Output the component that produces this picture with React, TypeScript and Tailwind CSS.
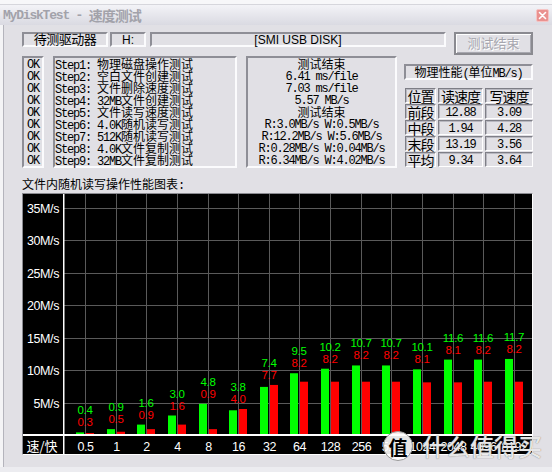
import React from 'react';

const steps = [
  '物理磁盘操作测试',
  '空白文件创建测试',
  '文件删除速度测试',
  '32MB文件创建测试',
  '文件读写速度测试',
  '4.0K随机读写测试',
  '512K随机读写测试',
  '4.0K文件复制测试',
  '32MB文件复制测试',
];

const results = [
  '测试结束',
  '6.41 ms/file',
  '7.03 ms/file',
  '5.57 MB/s',
  '测试结束',
  'R:3.0MB/s W:0.5MB/s',
  'R:12.2MB/s W:5.6MB/s',
  'R:0.28MB/s W:0.04MB/s',
  'R:6.34MB/s W:4.02MB/s',
];

const perf = [
  ['前段', '12.88', '3.09'],
  ['中段', '1.94', '4.28'],
  ['末段', '13.19', '3.56'],
  ['平均', '9.34', '3.64'],
];

// block size, read (green), write (red)
const blocks: [string, number, number][] = [
  ['0.5', 0.4, 0.3],
  ['1', 0.9, 0.5],
  ['2', 1.6, 0.9],
  ['4', 3.0, 1.6],
  ['8', 4.8, 0.9],
  ['16', 3.8, 4.0],
  ['32', 7.4, 7.7],
  ['64', 9.5, 8.2],
  ['128', 10.2, 8.2],
  ['256', 10.7, 8.2],
  ['512', 10.7, 8.2],
  ['1024', 10.1, 8.1],
  ['2048', 11.6, 8.1],
  ['4096', 11.6, 8.2],
  ['8192', 11.7, 8.2],
];

const sunken = 'border-2 border-t-[#8e8e96] border-l-[#8e8e96] border-r-[#fbfbfd] border-b-[#fbfbfd]';
const cell = 'border border-t-[#7e7e86] border-l-[#7e7e86] border-r-white border-b-white shadow-[inset_1px_1px_0_#b8b8c0]';

// SimSun-like: ASCII runs in a narrow mono (6px advance), CJK runs at 12px.
function Mixed({ text }: { text: string }) {
  const parts = text.match(/[\x00-\x7f]+|[^\x00-\x7f]+/g) ?? [];
  return (
    <>
      {parts.map((p, i) =>
        /^[\x00-\x7f]/.test(p) ? (
          <span key={i} className="font-['Liberation_Mono',monospace] tracking-[-1.2px] whitespace-pre">
            {p}
          </span>
        ) : (
          <span key={i} className="font-['Noto_Sans_CJK_SC']">
            {p}
          </span>
        )
      )}
    </>
  );
}

function Chart() {
  const base = 241;
  const perM = 6.5;
  const cx = (i: number) => Math.round(62 + 30.64 * i);

  return (
    <svg width={509} height={260} className="block">
      {/* horizontal grid */}
      {[1, 2, 3, 4, 5, 6, 7].map(k => (
        <line key={k} x1={40} x2={509} y1={Math.round(base - 32.5 * k) + 0.5} y2={Math.round(base - 32.5 * k) + 0.5} stroke="#5a5a5a" strokeWidth={1} />
      ))}
      {/* vertical grid */}
      {blocks.map((_, i) => (
        <line key={i} x1={cx(i) + 0.5} x2={cx(i) + 0.5} y1={0} y2={base} stroke="#5a5a5a" strokeWidth={1} />
      ))}
      {/* y labels */}
      {[1, 2, 3, 4, 5, 6, 7].map(k => (
        <text key={k} x={36} y={Math.round(base - 32.5 * k) + 5} textAnchor="end" letterSpacing={-0.4} className="fill-white font-['Liberation_Sans'] text-[12.5px]">
          {k * 5}M/s
        </text>
      ))}
      {/* bars + value labels */}
      {blocks.map(([label, r, w], i) => {
        const c = cx(i);
        const hr = r * perM;
        const hw = w * perM;
        const top = base - Math.max(hr, hw);
        return (
          <g key={label}>
            <rect x={c - 9} y={base - hr} width={8} height={hr} fill="#00ff00" />
            <rect x={c + 1} y={base - hw} width={8} height={hw} fill="#ff0000" />
            <text x={c} y={top - 18} textAnchor="middle" letterSpacing={-0.3} className="fill-[#00ff00] font-['Liberation_Sans'] text-[11.5px]">
              {r.toFixed(1)}
            </text>
            <text x={c} y={top - 6} textAnchor="middle" letterSpacing={-0.3} className="fill-[#ff0000] font-['Liberation_Sans'] text-[11.5px]">
              {w.toFixed(1)}
            </text>
            <text x={c + 0.5} y={257} textAnchor="middle" letterSpacing={-0.5} className="fill-white font-['Liberation_Sans'] text-[12.5px]">
              {label}
            </text>
          </g>
        );
      })}
      {/* axes */}
      <rect x={0} y={base - 1} width={509} height={2} fill="#ffffff" />
      <rect x={40} y={0} width={1.5} height={260} fill="#ffffff" />
      <text x={19} y={257} textAnchor="middle" className="fill-white font-['Noto_Sans_CJK_SC'] text-[13px]">
        速/快
      </text>
    </svg>
  );
}

export default function App() {
  return (
    <div className="relative w-[552px] h-[472px] overflow-hidden flex flex-col bg-[#e1e0e5] text-black text-[12px] font-['Liberation_Sans','Noto_Sans_CJK_SC',sans-serif]">
      {/* strip of whatever lies behind */}
      <div className="h-[5px] bg-[#f7f7f9] border-b border-[#d6d6dc]" />

      {/* title bar (inactive) */}
      <div className="h-[20px] flex justify-between bg-linear-to-b from-[#f3f3f7] to-[#dadae2]">
        <div className="pl-[3px] flex items-center font-bold text-[13px] text-[#a2a2aa] leading-none">
          <span className="font-['Liberation_Mono',monospace] tracking-[-1.2px] whitespace-pre">MyDiskTest - </span>
          <span className="font-['Noto_Sans_CJK_SC'] text-[14px] tracking-[-1px]">速度测试</span>
        </div>
        <div className="mt-[4px] mr-[3px] w-[13px] h-[13px] rounded-[2px] bg-[#ea918f] border border-[#f5c4c4] flex items-center justify-center">
          <svg width="9" height="9" viewBox="0 0 9 9">
            <path d="M1.5 1.5l6 6M7.5 1.5l-6 6" stroke="#fff" strokeWidth={1.6} strokeLinecap="round" />
          </svg>
        </div>
      </div>

      <div className="flex flex-1">
        <div className="w-[4px] bg-[#f4f4f6] border-r border-[#b4b4bc]" />

        <div className="flex flex-col pl-[18px] pr-[19px]">
          {/* drive row */}
          <div className="mt-[7px] flex items-start h-[23px]">
            <div className={`w-[86px] h-[15px] ${sunken} flex items-center justify-center leading-none text-[13px] tracking-[-0.5px]`}>待测驱动器</div>
            <div className={`ml-[2px] w-[36px] h-[15px] ${sunken} flex items-center justify-center leading-none`}>H:</div>
            <div className={`ml-[4px] w-[296px] h-[15px] ${sunken} flex items-center justify-center leading-none`}>[SMI USB DISK]</div>
            <div className="ml-[8px] w-[79px] h-[23px] border-2 border-[#8a8a90] shadow-[inset_1px_1px_0_#ffffff,inset_-1px_-1px_0_#a8a8b0] flex items-center justify-center text-[13px] text-[#a6a6ae] [text-shadow:1px_1px_0_#ffffff]">
              测试结束
            </div>
          </div>

          {/* status row */}
          <div className="mt-[1px] flex h-[112px]">
            <div className={`w-[22px] ${sunken} flex flex-col items-center`}>
              {steps.map((_, i) => (
                <div key={i} className="h-[12px] leading-[12px]">
                  <Mixed text="OK" />
                </div>
              ))}
            </div>

            <div className={`ml-[9px] w-[184px] ${sunken} flex flex-col`}>
              {steps.map((s, i) => (
                <div key={i} className="h-[12px] leading-[12px] whitespace-nowrap">
                  <Mixed text={`Step${i + 1}: ${s}`} />
                </div>
              ))}
            </div>

            <div className={`ml-[9px] w-[151px] ${sunken} flex flex-col items-center`}>
              {results.map((r, i) => (
                <div key={i} className="h-[12px] leading-[12px] whitespace-nowrap">
                  <Mixed text={r} />
                </div>
              ))}
            </div>

            <div className="ml-[7px] w-[129px] flex flex-col">
              <div className={`mt-[8px] h-[16px] ${sunken} flex items-center justify-center`}>
                <div className="h-[12px] leading-[12px] whitespace-nowrap">
                  <Mixed text="物理性能(单位MB/s)" />
                </div>
              </div>
              <div className="mt-[8px] ml-[1px] grid grid-cols-[31px_45px_48px] gap-x-[2px] gap-y-[1px]">
                {['位置', '读速度', '写速度'].map(h => (
                  <div key={h} className={`h-[15px] ${cell} flex items-center justify-center font-['Noto_Sans_CJK_SC'] text-[14px] tracking-[-1px] leading-none`}>
                    {h}
                  </div>
                ))}
                {perf.map(row =>
                  row.map((v, j) =>
                    j === 0 ? (
                      <div key={row[0] + j} className={`h-[15px] ${cell} flex items-center justify-center font-['Noto_Sans_CJK_SC'] text-[14px] tracking-[-1px] leading-none`}>
                        {v}
                      </div>
                    ) : (
                      <div key={row[0] + j} className={`h-[15px] ${cell} flex items-center justify-center`}>
                        <div className="h-[12px] leading-[12px]">
                          <Mixed text={v} />
                        </div>
                      </div>
                    )
                  )
                )}
              </div>
            </div>
          </div>

          {/* chart */}
          <div className="mt-[10px] h-[12px] leading-[12px] whitespace-nowrap">
            <Mixed text="文件内随机读写操作性能图表:" />
          </div>
          <div className="mt-[3px] w-[511px] h-[262px] bg-black border border-t-[#8a8a90] border-l-[#8a8a90] border-r-white border-b-white">
            <Chart />
          </div>
        </div>
      </div>

      <div className="h-[5px] bg-[#ececf0]" />

      {/* site watermark over the chart corner */}
      <div className="absolute left-[383px] top-[431px] w-[30px] h-[30px] rounded-full bg-white/90 border border-[#9a9a9a] flex items-center justify-center">
        <span className="font-['Noto_Sans_CJK_SC'] font-bold text-[19px] leading-none text-black">值</span>
      </div>
      <div className="absolute left-[422px] top-[431px] font-['Noto_Sans_CJK_SC'] font-medium text-[24px] leading-[30px] text-white/85 [text-shadow:0_0_1px_#555] whitespace-nowrap">
        什么值得买
      </div>
    </div>
  );
}
